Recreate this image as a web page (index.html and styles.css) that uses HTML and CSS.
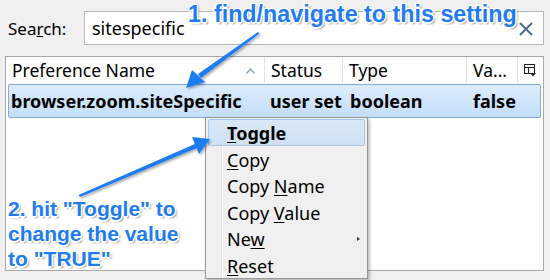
FILE: index.html
```html
<!DOCTYPE html>
<html lang="en">
<head>
  <meta charset="UTF-8" />
  <title>about:config</title>
  <link rel="stylesheet" href="styles.css">
</head>
<body>
  <div class="search-row">
    <label class="search-label">Sea<u>r</u>ch:</label>
    <div class="search-box">
      <span class="search-text">sitespecific</span>
      <svg class="clear-icon" width="14" height="14" viewBox="0 0 14 14">
        <path d="M1 1 L13 13 M13 1 L1 13" stroke="#4d6a8c" stroke-width="2" fill="none"/>
      </svg>
    </div>
  </div>

  <div class="prefs">
    <div class="prefs-head">
      <div class="col col-name">Preference Name
        <svg class="sort-icon" width="9" height="6" viewBox="0 0 9 6">
          <path d="M0.5 5.5 L4.5 1 L8.5 5.5" stroke="#8fa6c0" stroke-width="1.5" fill="none"/>
        </svg>
      </div>
      <div class="col col-status">Status</div>
      <div class="col col-type">Type</div>
      <div class="col col-value">Va...</div>
      <div class="col col-pick">
        <svg width="12" height="13" viewBox="0 0 12 13">
          <rect x="0.5" y="0.5" width="10" height="9" fill="none" stroke="#222"/>
          <path d="M0.5 3.5 H10.5 M4.5 3.5 V9.5" stroke="#222"/>
          <path d="M6 9 L12 9 L9 12.5 Z" fill="#222"/>
        </svg>
      </div>
    </div>
    <div class="prefs-body">
      <div class="pref-row selected">
        <div class="cell col-name">browser.zoom.siteSpecific</div>
        <div class="cell col-status">user set</div>
        <div class="cell col-type">boolean</div>
        <div class="cell col-value">false</div>
      </div>
    </div>
  </div>

  <ul class="menu">
    <li class="menu-item active"><b><u>T</u>oggle</b></li>
    <li class="menu-item"><u>C</u>opy</li>
    <li class="menu-item">Copy <u>N</u>ame</li>
    <li class="menu-item">Copy <u>V</u>alue</li>
    <li class="menu-item has-sub">Ne<u>w</u></li>
    <li class="menu-item"><u>R</u>eset</li>
  </ul>

  <svg class="arrows" width="550" height="280" viewBox="0 0 550 280">
    <defs>
      <filter id="shade" x="-20%" y="-20%" width="140%" height="140%">
        <feDropShadow dx="1.5" dy="1.5" stdDeviation="1" flood-color="#000" flood-opacity="0.35"/>
      </filter>
    </defs>
    <g fill="#1f7cf2" filter="url(#shade)">
      <polygon points="258,32 259.5,33.5 201,78 198,74"/>
      <polygon points="186,88 192,70 205,82"/>
      <polygon points="80,197 78.5,195 196,143.5 198,147.5"/>
      <polygon points="210,139 192,137 199,154"/>
    </g>
  </svg>

  <div class="note note-one">1. find/navigate to this setting</div>
  <div class="note note-two">2. hit "Toggle" to<br>change the value<br>to "TRUE"</div>
</body>
</html>
```

FILE: styles.css
```css
body {
  margin: 0;
  width: 550px;
  height: 280px;
  overflow: hidden;
  background: #f0f0f0;
  font-family: "Noto Sans", "Open Sans", sans-serif;
  font-size: 17.5px;
  color: #000;
  position: relative;
}

.search-row {
  display: flex;
  align-items: center;
  height: 34px;
  padding: 11px 6px 0 8px;
}

.search-label {
  width: 76px;
  font-size: 17px;
}

.search-box {
  flex: 1;
  height: 32px;
  background: white;
  border: 1px solid #b9b9b9;
  display: flex;
  align-items: center;
  padding: 0 10px 0 7px;
  font-size: 18px;
}

.search-text {
  flex: 1;
}

.clear-icon {
  margin-top: 1px;
}

.prefs {
  margin: 11px 6px 0 5px;
  height: 215px;
  background: white;
  border: 1px solid #a9a9a9;
  box-sizing: border-box;
}

.prefs-head {
  display: flex;
  height: 26px;
  align-items: stretch;
}

.col {
  display: flex;
  align-items: center;
  border-right: 1px solid #e3e3e3;
  padding-left: 6px;
  box-sizing: border-box;
}

.col-name { width: 259px; position: relative; }
.col-status { width: 78px; }
.col-type { width: 124px; }
.col-value { width: 51px; }
.col-pick { width: 25px; border-right: none; padding-left: 6px; }

.sort-icon {
  position: absolute;
  left: 240px;
  top: 11px;
}

.prefs-body {
  padding: 1px 2px 0 2px;
}

.pref-row {
  display: flex;
  height: 32px;
  align-items: center;
  font-weight: bold;
  font-size: 18px;
}

.pref-row.selected {
  background: linear-gradient(#dcecfc, #c4defa);
  border: 1px solid #86abd8;
  border-radius: 2px;
}

.cell {
  padding-left: 2px;
  box-sizing: border-box;
  white-space: nowrap;
}

.pref-row .col-name { width: 259px; }
.pref-row .col-status { width: 80px; }
.pref-row .col-type { width: 123px; }

.menu {
  position: absolute;
  left: 205px;
  top: 117px;
  width: 163px;
  height: 162px;
  margin: 0;
  padding: 1px 2px;
  box-sizing: border-box;
  list-style: none;
  font-size: 18px;
  background: #f0f0f0 linear-gradient(to right, transparent 15px, #e2e3e3 15px, #e2e3e3 16px, #fff 16px, #fff 17px, transparent 17px);
  border: 1px solid #979797;
  box-shadow: 2px 2px 3px rgba(0, 0, 0, 0.25);
}

.menu-item {
  height: 26.5px;
  line-height: 26px;
  padding-left: 18px;
  position: relative;
  border: 1px solid transparent;
  box-sizing: border-box;
}

.menu-item.active {
  background: linear-gradient(#d9e8f6, #cfe1f3);
  border-color: #a8c8e8;
  border-radius: 2px;
}

.menu-item u {
  text-underline-offset: 2px;
}

.has-sub::after {
  content: "";
  position: absolute;
  right: 4px;
  top: 11px;
  border-left: 3px solid #333;
  border-top: 2.5px solid transparent;
  border-bottom: 2.5px solid transparent;
}

.arrows {
  position: absolute;
  left: 0;
  top: 0;
}

.note {
  position: absolute;
  font-family: "Liberation Sans", Arial, sans-serif;
  font-weight: bold;
  font-size: 21px;
  color: #1f7cf2;
  line-height: 25px;
  text-shadow:
    -1px -1px 0 #fff, 1px -1px 0 #fff, -1px 1px 0 #fff, 1px 1px 0 #fff,
    0 -1.5px 0 #fff, 0 1.5px 0 #fff, -1.5px 0 0 #fff, 1.5px 0 0 #fff,
    2px 2px 2px rgba(0, 0, 0, 0.45);
}

.note-one {
  left: 188px;
  top: 0;
  font-size: 23.3px;
  line-height: 28px;
}

.note-two {
  left: 8px;
  top: 196px;
}
```
